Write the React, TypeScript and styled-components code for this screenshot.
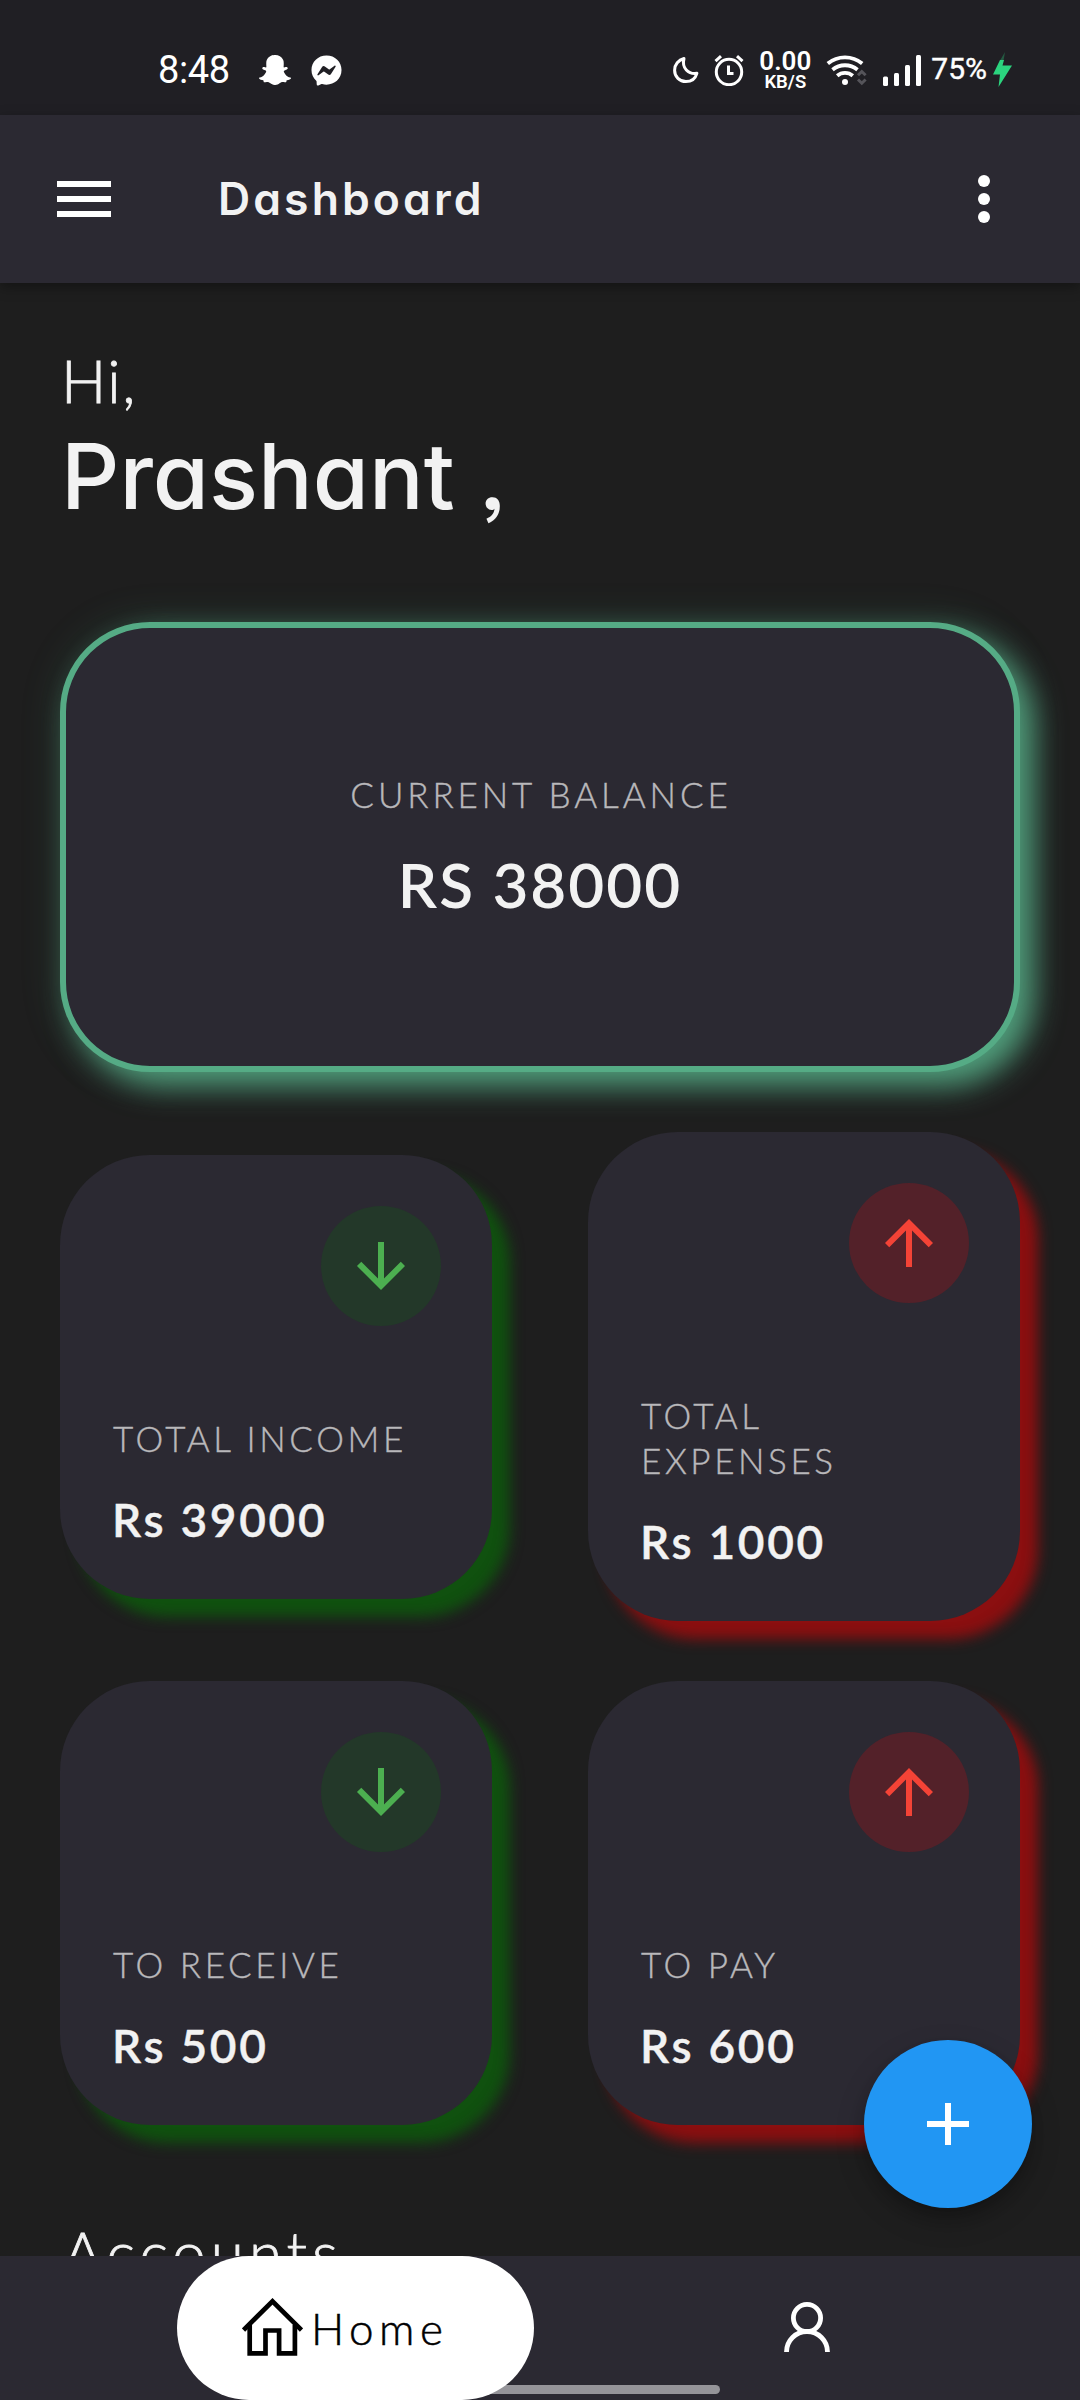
import React from 'react';
import styled, { createGlobalStyle } from 'styled-components';
import { FaSnapchatGhost, FaFacebookMessenger } from 'react-icons/fa';

const colors = {
  page: '#1e1e1e',
  surface: '#2b2932',
  status: '#201f24',
  text: '#f2f2f2',
  muted: '#b9b8bb',
  mint: '#55ab85',
  green: '#4caf50',
  red: '#f44336',
};

const display = `Inter, 'Noto Sans', sans-serif`;
const body = `Lato, 'Noto Sans', sans-serif`;
const system = `Roboto, 'Noto Sans', sans-serif`;

const GlobalStyle = createGlobalStyle`
  * { box-sizing: border-box; }
  body { margin: 0; background: ${colors.page}; }
  svg { display: block; flex: none; }
`;

const Screen = styled.div`
  position: relative;
  display: flex;
  flex-direction: column;
  width: 1080px;
  height: 2400px;
  overflow: hidden;
  background: ${colors.page};
  color: ${colors.text};
  font-family: ${body};
`;

const StatusBar = styled.div`
  display: flex;
  justify-content: space-between;
  height: 115px;
  padding: 25px 67px 0 158px;
  background: ${colors.status};
  color: #fff;
  font-family: ${system};
`;

const StatusGroup = styled.div<{ $gap: number }>`
  display: flex;
  align-items: center;
  height: 90px;
  gap: ${(p) => p.$gap}px;
`;

const Clock = styled.span`
  width: 81px;
  font-size: 38px;
  line-height: 46px;
  letter-spacing: -0.4px;
`;

const Speed = styled.div`
  display: flex;
  flex-direction: column;
  align-items: center;
  width: 52px;
  font-weight: 600;
`;

const SpeedValue = styled.span`
  font-size: 26px;
  line-height: 24px;
`;

const SpeedUnit = styled.span`
  font-size: 18.5px;
  line-height: 18px;
`;

const Battery = styled.span`
  margin-left: -6px;
  margin-right: -10px;
  padding-bottom: 3px;
  font-size: 30px;
  line-height: 36px;
  -webkit-text-stroke: 0.4px currentColor;
`;

const AppBar = styled.header`
  position: relative;
  z-index: 1;
  display: flex;
  align-items: center;
  height: 168px;
  padding: 0 90px 0 57px;
  background: ${colors.surface};
  box-shadow: 0 4px 12px rgba(0, 0, 0, 0.35);
`;

const MenuLines = styled.div`
  display: flex;
  flex-direction: column;
  gap: 9px;
  width: 54px;
`;

const MenuLine = styled.i`
  height: 6px;
  background: #fff;
`;

const Title = styled.h1`
  flex: 1;
  margin: 0 0 0 107px;
  font: 600 44.5px/56px ${display};
  font-feature-settings: 'cv11';
  letter-spacing: 3.1px;
`;

const MoreDots = styled.div`
  display: flex;
  flex-direction: column;
  gap: 6px;
`;

const Dot = styled.i`
  width: 12px;
  height: 12px;
  border-radius: 50%;
  background: #fff;
`;

const Content = styled.main`
  flex: 1;
  min-height: 0;
  overflow: hidden;
  padding: 59px 60px 0;
`;

const Greeting = styled.p`
  margin: 0;
  padding-left: 1px;
  font-size: 60px;
  line-height: 76px;
  font-weight: 300;
  letter-spacing: 1.5px;
  -webkit-text-stroke: 0.8px currentColor;
`;

const UserName = styled.p`
  margin: 0;
  padding: 1px 0 89px 1px;
  font: 500 91px/114px ${display};
  font-feature-settings: 'cv11', 'ss03';
  white-space: pre;
`;

const BalanceCard = styled.section`
  display: flex;
  flex-direction: column;
  align-items: center;
  justify-content: center;
  gap: 28px;
  height: 450px;
  margin-bottom: 60px;
  border: 6px solid ${colors.mint};
  border-radius: 90px;
  background: ${colors.surface};
  box-shadow: 14px 14px 30px rgba(85, 171, 133, 0.9), 0 0 40px rgba(85, 171, 133, 0.18);
`;

const Label = styled.span`
  max-width: 300px;
  padding-left: 2px;
  color: ${colors.muted};
  font-size: 35px;
  line-height: 45px;
  font-weight: 300;
  letter-spacing: 3.6px;
  -webkit-text-stroke: 0.4px currentColor;
`;

const BalanceLabel = styled(Label)`
  max-width: none;
  letter-spacing: 3.9px;
`;

const BalanceValue = styled.strong`
  font-size: 62px;
  line-height: 78px;
  font-weight: 600;
  letter-spacing: 2px;
`;

const Stats = styled.div`
  display: grid;
  grid-template-columns: 432px 432px;
  justify-content: space-between;
  align-items: center;
  row-gap: 60px;
`;

const StatCard = styled.section<{ $glow: string }>`
  display: flex;
  flex-direction: column;
  padding: 51px 51px 50px;
  border-radius: 90px;
  background: ${colors.surface};
  box-shadow: 18px 18px 14px ${(p) => p.$glow};
`;

const Badge = styled.div<{ $bg: string; $fg: string }>`
  display: flex;
  align-items: center;
  justify-content: center;
  align-self: flex-end;
  width: 120px;
  height: 120px;
  margin-bottom: 90px;
  border-radius: 50%;
  background: ${(p) => p.$bg};
  color: ${(p) => p.$fg};
`;

const Amount = styled.strong`
  margin-top: 30px;
  padding-left: 1px;
  font-size: 46px;
  line-height: 58px;
  font-weight: 600;
  letter-spacing: 2.7px;
  -webkit-text-stroke: 0.4px currentColor;
`;

const SectionTitle = styled.h2`
  margin: 89px 0 0;
  padding-left: 3px;
  font-size: 60px;
  line-height: 76px;
  font-weight: 300;
  letter-spacing: 5.1px;
  -webkit-text-stroke: 0.8px currentColor;
`;

const Fab = styled.button`
  position: absolute;
  right: 48px;
  bottom: 192px;
  display: flex;
  align-items: center;
  justify-content: center;
  width: 168px;
  height: 168px;
  padding: 0;
  border: 0;
  border-radius: 50%;
  background: #2196f3;
  color: #fff;
  box-shadow: 0 9px 15px -3px rgba(0, 0, 0, 0.2), 0 12px 30px rgba(0, 0, 0, 0.2);
`;

const BottomNav = styled.nav`
  display: flex;
  height: 144px;
  padding-left: 177px;
  background: ${colors.surface};
`;

const ActiveTab = styled.div`
  display: flex;
  align-items: center;
  width: 357px;
  padding: 0 0 2px 65px;
  border-radius: 72px;
  background: #fff;
  color: #000;
  font-size: 44px;
  line-height: 56px;
  font-weight: 300;
  letter-spacing: 5.5px;
  -webkit-text-stroke: 0.5px currentColor;
`;

const TabText = styled.span`
  padding: 1px 0 0 8px;
`;

const Tab = styled.div`
  flex: 1;
  display: flex;
  align-items: center;
  justify-content: center;
  padding-bottom: 2px;
  color: #fff;
`;

const GestureBar = styled.i`
  position: absolute;
  left: 360px;
  bottom: 6px;
  width: 360px;
  height: 9px;
  border-radius: 5px;
  background: rgba(255, 255, 255, 0.5);
`;

const Moon = () => (
  <svg width="26" height="28" viewBox="0 0 26 28" fill="none" stroke="currentColor" strokeWidth="3" strokeLinejoin="round">
    <path d="M11 2.500C5.500 4 1.600 8.600 1.600 14.200c0 6.500 5 11.400 11.300 11.400 5.200 0 9.500-3 11-8.300-8.500 1.200-15.400-5.300-12.900-14.800z" />
  </svg>
);

const Alarm = () => (
  <svg width="30" height="32" viewBox="0 0 30 32" fill="none" stroke="currentColor" strokeWidth="3">
    <circle cx="15" cy="18" r="12.700" />
    <path d="M1.500 7.200 7 2.200M28.500 7.200 23 2.200M14.500 11.500v8h5" />
  </svg>
);

const Wifi = () => (
  <svg width="42" height="32" viewBox="0 0 42 32" fill="none" stroke="currentColor" strokeWidth="3.800">
    <path d="M1.800 9.500a27 27 0 0 1 34.400 0M6.500 15.800a19.500 19.500 0 0 1 25 0M11.200 21.800a12 12 0 0 1 15.600 0" />
    <circle cx="19" cy="28" r="3" fill="currentColor" stroke="none" />
    <path d="m32 21.200 3.800-3.700 3.800 3.700M32 25.500l3.800 3.700 3.800-3.700" stroke="#55545a" strokeWidth="3" />
  </svg>
);

const Signal = () => (
  <svg width="39" height="31" viewBox="0 0 39 31" fill="currentColor">
    <rect x="0" y="21.500" width="5" height="9.500" rx="1.500" />
    <rect x="11" y="18" width="5" height="13" rx="1.500" />
    <rect x="22" y="10" width="5" height="21" rx="1.500" />
    <rect x="33" y="0" width="5" height="31" rx="1.500" />
  </svg>
);

const Bolt = () => (
  <svg width="21" height="36" viewBox="0 0 21 36">
    <path d="M13 0 8 8.500h3.500z" fill="#245a42" />
    <path d="M8 8h4l-1.500 5.500H20L6.500 35 8 22.500H1z" fill="#2bd47e" />
  </svg>
);

const Arrow = ({ up }: { up?: boolean }) => (
  <svg width="72" height="72" viewBox="0 0 24 24" fill="currentColor">
    {up ? (
      <path d="M4 12l1.410 1.410L11 7.830V20h2V7.830l5.580 5.590L20 12l-8-8-8 8z" />
    ) : (
      <path d="M20 12l-1.410-1.410L13 16.170V4h-2v12.170l-5.580-5.590L4 12l8 8 8-8z" />
    )}
  </svg>
);

const Plus = () => (
  <svg width="72" height="72" viewBox="0 0 24 24" fill="currentColor">
    <path d="M19 13h-6v6h-2v-6H5v-2h6V5h2v6h6v2z" />
  </svg>
);

const House = () => (
  <svg width="61" height="58" viewBox="0 0 61 58" fill="none" stroke="currentColor" strokeWidth="4.700">
    <path d="M1.500 32 30.500 3.300 59.500 32" />
    <path d="M7.700 27v28.300h15.800V32.500h13.600v22.800h15.800V27" />
  </svg>
);

const Person = () => (
  <svg width="48" height="52" viewBox="0 0 48 52" fill="none" stroke="currentColor" strokeWidth="4.800">
    <circle cx="24" cy="17" r="13.600" />
    <path d="M3.500 51a20.500 20.500 0 0 1 41 0" />
  </svg>
);

type Stat = { label: string; amount: string; up?: boolean };

const stats: Stat[] = [
  { label: 'TOTAL INCOME', amount: 'Rs 39000' },
  { label: 'TOTAL EXPENSES', amount: 'Rs 1000', up: true },
  { label: 'TO RECEIVE', amount: 'Rs 500' },
  { label: 'TO PAY', amount: 'Rs 600', up: true },
];

export default function App() {
  return (
    <Screen>
      <GlobalStyle />
      <StatusBar>
        <StatusGroup $gap={20}>
          <Clock>8:48</Clock>
          <FaSnapchatGhost size={32} />
          <FaFacebookMessenger size={31} />
        </StatusGroup>
        <StatusGroup $gap={15}>
          <Moon />
          <Alarm />
          <Speed>
            <SpeedValue>0.00</SpeedValue>
            <SpeedUnit>KB/S</SpeedUnit>
          </Speed>
          <Wifi />
          <Signal />
          <Battery>75%</Battery>
          <Bolt />
        </StatusGroup>
      </StatusBar>
      <AppBar>
        <MenuLines>
          <MenuLine />
          <MenuLine />
          <MenuLine />
        </MenuLines>
        <Title>Dashboard</Title>
        <MoreDots>
          <Dot />
          <Dot />
          <Dot />
        </MoreDots>
      </AppBar>
      <Content>
        <Greeting>Hi,</Greeting>
        <UserName>Prashant ,</UserName>
        <BalanceCard>
          <BalanceLabel>CURRENT BALANCE</BalanceLabel>
          <BalanceValue>RS 38000</BalanceValue>
        </BalanceCard>
        <Stats>
          {stats.map((s) => (
            <StatCard key={s.label} $glow={s.up ? '#8b0f10' : '#10510f'}>
              <Badge $bg={s.up ? '#532129' : '#233829'} $fg={s.up ? colors.red : colors.green}>
                <Arrow up={s.up} />
              </Badge>
              <Label>{s.label}</Label>
              <Amount>{s.amount}</Amount>
            </StatCard>
          ))}
        </Stats>
        <SectionTitle>Accounts</SectionTitle>
      </Content>
      <BottomNav>
        <ActiveTab>
          <House />
          <TabText>Home</TabText>
        </ActiveTab>
        <Tab>
          <Person />
        </Tab>
      </BottomNav>
      <Fab aria-label="Add">
        <Plus />
      </Fab>
      <GestureBar />
    </Screen>
  );
}
